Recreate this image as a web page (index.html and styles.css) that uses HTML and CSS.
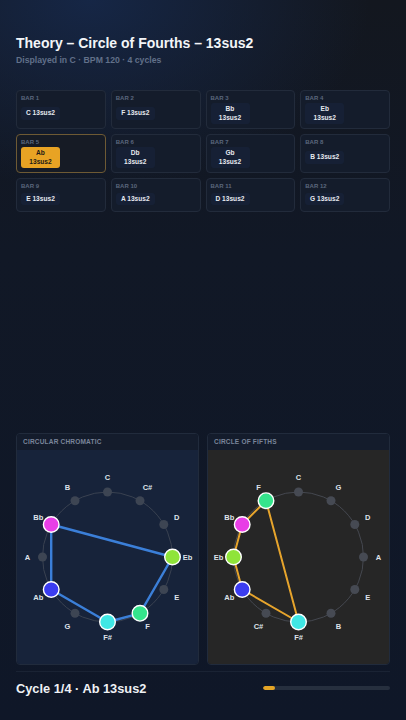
FILE: index.html
```html
<!DOCTYPE html>
<html lang="en">
<head>
<meta charset="utf-8">
<title>Theory – Circle of Fourths – 13sus2</title>
<link rel="stylesheet" href="styles.css">
</head>
<body>
<div class="app">
  <header class="head">
    <h1 class="title">Theory – Circle of Fourths – 13sus2</h1>
    <p class="sub">Displayed in C · BPM 120 · 4 cycles</p>
  </header>

  <section class="bars">
    <div class="bar"><span class="bar-no">BAR 1</span><span class="chord">C 13sus2</span></div>
    <div class="bar"><span class="bar-no">BAR 2</span><span class="chord">F 13sus2</span></div>
    <div class="bar"><span class="bar-no">BAR 3</span><span class="chord">Bb 13sus2</span></div>
    <div class="bar"><span class="bar-no">BAR 4</span><span class="chord">Eb 13sus2</span></div>
    <div class="bar active"><span class="bar-no">BAR 5</span><span class="chord">Ab 13sus2</span></div>
    <div class="bar"><span class="bar-no">BAR 6</span><span class="chord">Db 13sus2</span></div>
    <div class="bar"><span class="bar-no">BAR 7</span><span class="chord">Gb 13sus2</span></div>
    <div class="bar"><span class="bar-no">BAR 8</span><span class="chord">B 13sus2</span></div>
    <div class="bar"><span class="bar-no">BAR 9</span><span class="chord">E 13sus2</span></div>
    <div class="bar"><span class="bar-no">BAR 10</span><span class="chord">A 13sus2</span></div>
    <div class="bar"><span class="bar-no">BAR 11</span><span class="chord">D 13sus2</span></div>
    <div class="bar"><span class="bar-no">BAR 12</span><span class="chord">G 13sus2</span></div>
  </section>

  <div class="spacer"></div>

  <section class="panels">
    <div class="panel chromatic">
      <div class="panel-head">CIRCULAR CHROMATIC</div>
      <div class="panel-body">
        <svg class="wheel" viewBox="0 0 181 214" width="181" height="214">
          <g transform="translate(90.5,107)">
            <circle class="ring" r="65" cx="0" cy="0"/>
            <circle class="dot" cx="0" cy="-65" r="4.5"/>
            <circle class="dot" cx="32.5" cy="-56.29" r="4.5"/>
            <circle class="dot" cx="56.29" cy="-32.5" r="4.5"/>
            <circle class="dot" cx="56.29" cy="32.5" r="4.5"/>
            <circle class="dot" cx="-32.5" cy="56.29" r="4.5"/>
            <circle class="dot" cx="-65" cy="0" r="4.5"/>
            <circle class="dot" cx="-32.5" cy="-56.29" r="4.5"/>
            <polygon class="link blue" points="65,0 32.5,56.29 0,65 -56.29,32.5 -56.29,-32.5"/>
            <circle class="node n-eb" cx="65" cy="0" r="7.8"/>
            <circle class="node n-f" cx="32.5" cy="56.29" r="7.8"/>
            <circle class="node n-fs" cx="0" cy="65" r="7.8"/>
            <circle class="node n-ab" cx="-56.29" cy="32.5" r="7.8"/>
            <circle class="node n-bb" cx="-56.29" cy="-32.5" r="7.8"/>
            <text class="lbl" x="0" y="-80">C</text>
            <text class="lbl" x="40" y="-69.28">C#</text>
            <text class="lbl" x="69.28" y="-40">D</text>
            <text class="lbl" x="80" y="0">Eb</text>
            <text class="lbl" x="69.28" y="40">E</text>
            <text class="lbl" x="40" y="69.28">F</text>
            <text class="lbl" x="0" y="80">F#</text>
            <text class="lbl" x="-40" y="69.28">G</text>
            <text class="lbl" x="-69.28" y="40">Ab</text>
            <text class="lbl" x="-80" y="0">A</text>
            <text class="lbl" x="-69.28" y="-40">Bb</text>
            <text class="lbl" x="-40" y="-69.28">B</text>
          </g>
        </svg>
      </div>
    </div>
    <div class="panel fifths">
      <div class="panel-head">CIRCLE OF FIFTHS</div>
      <div class="panel-body">
        <svg class="wheel" viewBox="0 0 181 214" width="181" height="214">
          <g transform="translate(90.5,107)">
            <circle class="ring" r="65" cx="0" cy="0"/>
            <circle class="dot" cx="0" cy="-65" r="4.5"/>
            <circle class="dot" cx="32.5" cy="-56.29" r="4.5"/>
            <circle class="dot" cx="56.29" cy="-32.5" r="4.5"/>
            <circle class="dot" cx="65" cy="0" r="4.5"/>
            <circle class="dot" cx="56.29" cy="32.5" r="4.5"/>
            <circle class="dot" cx="32.5" cy="56.29" r="4.5"/>
            <circle class="dot" cx="-32.5" cy="56.29" r="4.5"/>
            <polygon class="link orange" points="0,65 -56.29,32.5 -65,0 -56.29,-32.5 -32.5,-56.29"/>
            <circle class="node n-fs" cx="0" cy="65" r="7.8"/>
            <circle class="node n-ab" cx="-56.29" cy="32.5" r="7.8"/>
            <circle class="node n-eb" cx="-65" cy="0" r="7.8"/>
            <circle class="node n-bb" cx="-56.29" cy="-32.5" r="7.8"/>
            <circle class="node n-f" cx="-32.5" cy="-56.29" r="7.8"/>
            <text class="lbl" x="0" y="-80">C</text>
            <text class="lbl" x="40" y="-69.28">G</text>
            <text class="lbl" x="69.28" y="-40">D</text>
            <text class="lbl" x="80" y="0">A</text>
            <text class="lbl" x="69.28" y="40">E</text>
            <text class="lbl" x="40" y="69.28">B</text>
            <text class="lbl" x="0" y="80">F#</text>
            <text class="lbl" x="-40" y="69.28">C#</text>
            <text class="lbl" x="-69.28" y="40">Ab</text>
            <text class="lbl" x="-80" y="0">Eb</text>
            <text class="lbl" x="-69.28" y="-40">Bb</text>
            <text class="lbl" x="-40" y="-69.28">F</text>
          </g>
        </svg>
      </div>
    </div>
  </section>

  <footer class="foot">
    <span class="status">Cycle 1/4 · Ab 13sus2</span>
    <div class="progress"><div class="progress-fill" style="width: 12px"></div></div>
  </footer>
</div>
</body>
</html>
```

FILE: styles.css
```css
* { box-sizing: border-box; }

html, body {
  margin: 0;
  padding: 0;
  height: 720px;
  overflow: hidden;
}

body {
  font-family: "Liberation Sans", Arial, sans-serif;
  color: #e8ebf0;
  background:
    radial-gradient(ellipse 280px 190px at 90px 0px, rgba(22, 40, 74, 0.9), rgba(22, 40, 74, 0) 100%),
    linear-gradient(180deg, #13171f 0%, #111826 35%, #0f1728 100%);
}

.app {
  height: 720px;
  display: flex;
  flex-direction: column;
  padding: 0 16px;
}

.head {
  padding-top: 33px;
}

.title {
  margin: 0;
  font-size: 14px;
  line-height: 20px;
  font-weight: 700;
  color: #f3f5f8;
}

.sub {
  margin: 1px 0 0;
  font-size: 8.7px;
  line-height: 12px;
  font-weight: 700;
  color: #617089;
}

.bars {
  margin-top: 24px;
  display: grid;
  grid-template-columns: repeat(4, 1fr);
  gap: 5px;
}

.bar {
  display: flex;
  flex-direction: column;
  align-items: flex-start;
  min-height: 34px;
  padding: 4px 4px 4px;
  background: #141c2b;
  border: 1px solid #222b3b;
  border-radius: 4px;
}

.bar.active {
  border-color: #6e5a34;
  background: #161b25;
}

.bar-no {
  font-size: 6px;
  line-height: 7px;
  margin-bottom: 1px;
  font-weight: 700;
  color: #5b677d;
}

.chord {
  margin: auto 0;
  width: 39px;
  padding: 2px 4px;
  font-size: 6.6px;
  line-height: 8.5px;
  font-weight: 700;
  text-align: center;
  color: #e6e9ef;
  background: rgba(36, 54, 100, 0.18);
  border-radius: 3px;
}

.bar.active .chord {
  background: #e8a324;
  color: #1c1a16;
}

.spacer { flex: 1; }

.panels {
  display: grid;
  grid-template-columns: 1fr 1fr;
  gap: 8px;
  height: 232px;
}

.panel {
  display: flex;
  flex-direction: column;
  border: 1px solid #212b3c;
  border-radius: 4px;
  overflow: hidden;
}

.panel-head {
  height: 16px;
  line-height: 16px;
  padding-left: 6px;
  font-size: 6.5px;
  font-weight: 700;
  letter-spacing: 0.2px;
  color: #7a859a;
  background: #141c2c;
}

.panel-body {
  flex: 1;
  display: flex;
  align-items: center;
  justify-content: center;
}

.chromatic .panel-body { background: #17233a; }
.fifths .panel-body { background: #262626; }

.wheel { display: block; }

.ring {
  fill: none;
  stroke: #3a4251;
  stroke-width: 1;
}

.fifths .ring { stroke: #454850; }

.dot {
  fill: #3d4553;
}

.fifths .dot { fill: #464a53; }

.link {
  fill: none;
  stroke-width: 2.4;
  stroke-linejoin: round;
}

.link.blue { stroke: #3b7fd8; }
.link.orange { stroke: #e6a42c; stroke-width: 2; }

.node {
  stroke: #ffffff;
  stroke-width: 1.4;
}

.n-bb { fill: #e83ee6; }
.n-eb { fill: #8fe43a; }
.n-f  { fill: #35e48c; }
.n-fs { fill: #3fe7e4; }
.n-ab { fill: #3b3cf0; }

.lbl {
  font-family: "Liberation Sans", Arial, sans-serif;
  font-size: 7.5px;
  font-weight: 700;
  fill: #dfe3ea;
  text-anchor: middle;
  dominant-baseline: central;
}

.foot {
  margin-top: 6px;
  margin-bottom: 16px;
  height: 33px;
  border-top: 1px solid #1a2334;
  display: flex;
  align-items: center;
}

.status {
  font-size: 12.8px;
  font-weight: 700;
  color: #eef1f5;
}

.progress {
  margin-left: auto;
  width: 127px;
  height: 4px;
  border-radius: 2px;
  background: #262f3e;
  overflow: hidden;
}

.progress-fill {
  height: 100%;
  border-radius: 2px;
  background: #e4a526;
}
```
